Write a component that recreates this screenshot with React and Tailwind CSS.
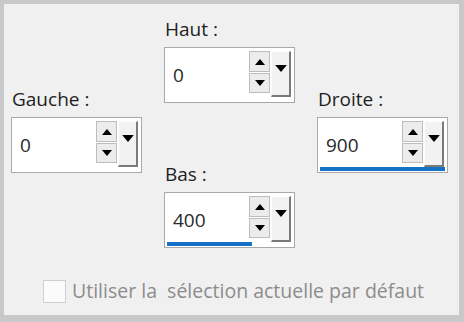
import React from 'react';

const Tri = ({ up, w = 10, h = 6 }) => (
  <svg width={w} height={h} viewBox="0 0 10 6" className="block">
    {up ? <polygon points="0,6 10,6 5,0" fill="#000" /> : <polygon points="0,0 10,0 5,6" fill="#000" />}
  </svg>
);

// Spin field with up/down buttons and a dropdown arrow
const SpinField = ({ label, value, bar }) => (
  <div className="flex flex-col w-[131px]">
    <div className="pl-[1px] h-[25px] -mt-[2px] mb-[2px] text-[19px] leading-[19px] text-[#1e1e1e]">{label}</div>
    <div className="relative h-[56px] bg-white border border-[#a9a9a9]">
      <div className="absolute left-[8px] top-[13px] text-[19px] leading-[28px] text-[#2a2a2a]">{value}</div>
      <div className="absolute left-[84px] top-[3px] flex flex-col gap-[1px]">
        <div className="w-[21px] h-[21px] bg-[#ececec] border border-[#bdbdbd] flex items-center justify-center">
          <Tri up />
        </div>
        <div className="w-[21px] h-[20px] bg-[#ececec] border border-[#bdbdbd] flex items-center justify-center">
          <Tri />
        </div>
      </div>
      <div className="absolute left-[106px] top-[3px] w-[20px] h-[46px] bg-[#f2f2f2] border-t border-l border-[#fdfdfd] border-r-2 border-b-2 border-r-[#7a7a7a] border-b-[#7a7a7a] flex items-start justify-center pt-[13px]">
        <Tri w={12} h={7} />
      </div>
      {bar && (
        <div
          className="absolute left-[2px] bottom-[1px] h-[4px] bg-[#1672c6]"
          style={{ width: bar }}
        />
      )}
    </div>
  </div>
);

export default function App() {
  return (
    <div
      className="w-[464px] h-[322px] bg-[#c9c9c9] pt-[4px] pl-[4px] pr-[5px] pb-[7px]"
      style={{ fontFamily: '"Open Sans", "Noto Sans", sans-serif' }}
    >
      <div className="w-full h-full bg-[#f0f0f0] flex flex-col">
        <div className="flex gap-[22px] pl-[7px]">
          <div className="pt-[88px]">
            <SpinField label="Gauche :" value="0" />
          </div>
          <div className="pt-[18px] flex flex-col gap-[64px]">
            <SpinField label="Haut :" value="0" />
            <SpinField label="Bas :" value="400" bar="85px" />
          </div>
          <div className="pt-[88px]">
            <SpinField label="Droite :" value="900" bar="125px" />
          </div>
        </div>
        <div className="flex items-center mt-[31px] pl-[39px] gap-[6px]">
          <div className="w-[23px] h-[23px] bg-[#fbfbfb] border border-[#cfcfcf]" />
          <span className="whitespace-pre text-[19.5px] leading-[24px] text-[#8c8c8c]">Utiliser la  sélection actuelle par défaut</span>
        </div>
      </div>
    </div>
  );
}
